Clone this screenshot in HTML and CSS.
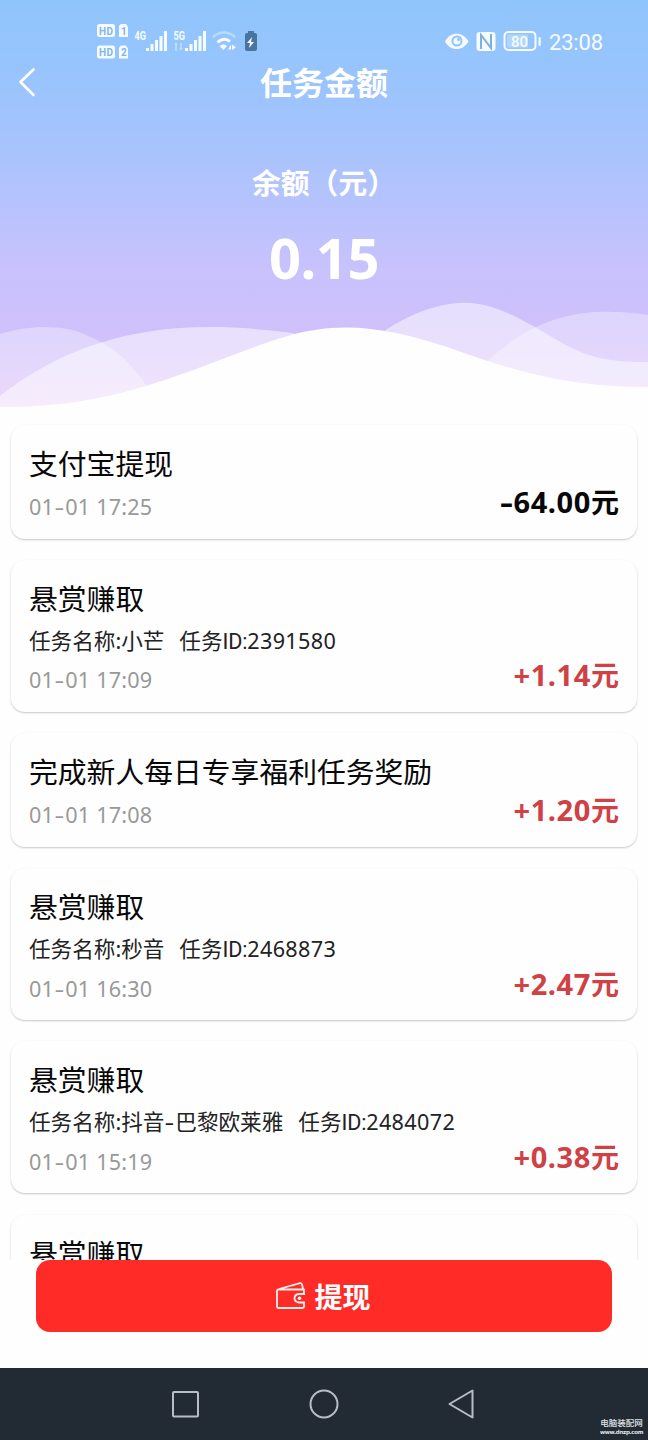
FILE: index.html
```html
<!DOCTYPE html>
<html lang="zh-CN">
<head>
<meta charset="utf-8">
<title>任务金额</title>
<link rel="stylesheet" href="styles.css">
</head>
<body>
<div class="screen">
  <header class="hero">
    <svg class="waves" viewBox="0 0 648 120" width="648" height="120">
      <path class="wave-soft" d="M0 44C30 35 65 34 88 46C108 54 128 68 146 95L150 120H0Z"/>
      <path class="wave-mid" d="M0 106C28 84 65 63 100 53C150 37 210 32 292 43L340 60L230 100L60 120H0Z"/>
      <path class="wave-mid" d="M374 48C412 20 447 11 472 13C502 16 530 34 564 54C590 68 610 72 648 72V120H384Z"/>
      <path class="wave-soft" d="M480 79C515 41 560 20 612 22C628 22 640 24 648 25V120H480Z"/>
      <path class="wave-front" d="M0 117C60 117 105 109 152 94C205 78 275 45 315 40C360 33 400 42 450 58C510 80 570 98 648 97V120H0Z"/>
    </svg>
    <div class="status">
      <svg width="170" height="44" viewBox="94 20 170 44" fill="#f5fbff">
        <rect x="97" y="24" width="18" height="13" rx="2.5"/>
        <path d="M121 24H126L128 27V37H119V26Z"/>
        <rect x="97" y="45.500" width="18" height="13" rx="2.500"/>
        <path d="M121 45.500H126L128 48.500V58.500H119V47.500Z"/>
        <g class="chip-text"><text x="99" y="34.500" textLength="14">HD</text><text x="99" y="56" textLength="14">HD</text><text x="121" y="34.500">1</text><text x="121" y="56">2</text></g>
        <text class="net-text" x="134.500" y="39.500" textLength="11.500" lengthAdjust="spacingAndGlyphs">4G</text>
        <text class="net-text" x="173.500" y="39.500" textLength="11.500" lengthAdjust="spacingAndGlyphs">5G</text>
        <path d="M146 48h3v3h-3zM150.500 44h3v7h-3zM155 40h3v11h-3zM159.500 36h3v15h-3zM164 31h3v20h-3zM185 48h3v3h-3zM189.500 44h3v7h-3zM194 40h3v11h-3zM198.500 36h3v15h-3zM203 31h3v20h-3z"/>
        <path opacity=".4" d="M174 45l2-3 2 3h-1v6h-2v-6zM179 48h1v-5h2v5h1l-2 3z"/>
        <path d="M213 37Q224 28 235 37" fill="none" stroke="#f5fbff" stroke-width="2.500" opacity=".4"/>
        <path d="M217.500 42.500Q224 36.500 230 41.500" fill="none" stroke="#f5fbff" stroke-width="3"/>
        <path d="M219.500 46Q223.500 42.500 227 46L223.500 50ZM228 49.500l3-5v5zM232 44.500l4 3-4 2.500z"/>
        <path d="M248 31h6v2h1q2 0 2 2v14q0 2-2 2h-8q-2 0-2-2V35q0-2 2-2h1z" fill="#49749f"/>
        <path d="M252 37l-5 6h3l-1 5 5-6h-3z"/>
      </svg>
      <svg width="160" height="44" viewBox="443 20 160 44" fill="#f5fbff">
        <path d="M445 41.500C450 31 463 31 468.500 41.500C463 51.500 450 51.500 445 41.500Z"/>
        <circle cx="457" cy="41" r="5.500" fill="#90c2fa"/><circle cx="457" cy="41" r="3.600"/><circle cx="458.500" cy="39.500" r="1.500" fill="#90c2fa"/>
        <rect x="476.500" y="32" width="19" height="19" rx="3"/>
        <path d="M481 49V35L491 48V34" fill="none" stroke="#7eb0e6" stroke-width="2"/>
        <rect x="504.500" y="32" width="31" height="18" rx="4" fill="none" stroke="#f5fbff" stroke-width="2"/>
        <rect x="507" y="34.500" width="21" height="13" rx="1" opacity=".3"/>
        <rect x="538.500" y="37" width="2.200" height="9" rx="1"/>
        <text class="battery-text" x="511" y="47" textLength="17">80</text>
        <text class="clock-text" x="549" y="49.500" textLength="54">23:08</text>
      </svg>
    </div>
    <div class="titlebar">
      <svg class="back" width="20" height="30" viewBox="0 0 20 30"><path d="M16.500 2.500L3.500 15L16.500 28"/></svg>
      <h1 class="title">任务金额</h1>
    </div>
    <div class="balance-label">余额（元）</div>
    <div class="balance">0.15</div>
  </header>

  <main class="list">
    <article class="card"><div><h2 class="name">支付宝提现</h2><p class="date">01<span class="dash">-</span>01 17:25</p></div><strong class="amount out"><span class="dash">-</span>64.00<span class="unit">元</span></strong></article>
    <article class="card"><div><h2 class="name">悬赏赚取</h2><p class="desc"><span>任务名称:小芒</span><span>任务<span class="id">ID:</span><span class="num">2391580</span></span></p><p class="date">01<span class="dash">-</span>01 17:09</p></div><strong class="amount">+1.14<span class="unit">元</span></strong></article>
    <article class="card"><div><h2 class="name">完成新人每日专享福利任务奖励</h2><p class="date">01<span class="dash">-</span>01 17:08</p></div><strong class="amount">+1.20<span class="unit">元</span></strong></article>
    <article class="card"><div><h2 class="name">悬赏赚取</h2><p class="desc"><span>任务名称:秒音</span><span>任务<span class="id">ID:</span><span class="num">2468873</span></span></p><p class="date">01<span class="dash">-</span>01 16:30</p></div><strong class="amount">+2.47<span class="unit">元</span></strong></article>
    <article class="card"><div><h2 class="name">悬赏赚取</h2><p class="desc"><span>任务名称:抖音<span class="dash">-</span>巴黎欧莱雅</span><span>任务<span class="id">ID:</span><span class="num">2484072</span></span></p><p class="date">01<span class="dash">-</span>01 15:19</p></div><strong class="amount">+0.38<span class="unit">元</span></strong></article>
    <article class="card cut"><div><h2 class="name">悬赏赚取</h2></div></article>
  </main>

  <div class="action">
    <button class="withdraw">
      <svg width="30" height="28" viewBox="0 0 30 28"><path d="M28 12V7.500H2.500Q1 7.500 1 9V24.500Q1 26 2.500 26H26.500Q28 26 28 24.500V20.500M3 7L24 1.200Q25.500 1 26 2.500L27 7M29 12H23Q18.500 12.500 18.500 16.300T23 20.500H29"/><circle cx="23.500" cy="16.300" r="1.700"/></svg>
      <span>提现</span>
    </button>
  </div>

  <nav class="nav">
    <svg width="648" height="72" viewBox="0 0 648 72"><rect x="173" y="24" width="25" height="24.500" rx="1"/><circle cx="324" cy="36" r="13.500"/><path d="M472.500 22.500V49.500L449.500 36Z"/></svg>
    <div class="mark"><div class="mark-name">电脑装配网</div><div class="mark-url">www.dnzp.com</div></div>
  </nav>
</div>
</body>
</html>
```
FILE: styles.css
```css
* { box-sizing: border-box; }
body { margin: 0; background: #fff; font-family: "Noto Sans", "Noto Sans CJK SC", sans-serif; }
h1, h2, p { margin: 0; font-weight: 400; }
.screen { width: 648px; height: 1440px; overflow: hidden; display: flex; flex-direction: column; background: #fefefe; }

.hero { position: relative; flex: none; height: 410px; color: #fff; text-align: center; background: linear-gradient(#8fc5fc 0, #9bc4fd 90px, #abc3fd 160px, #c8c2fd 270px, #d0c0fb 335px, #e2c4f8 410px); }
.waves { position: absolute; left: 0; bottom: 0; display: block; }
.wave-soft { fill: #fff; opacity: .34; }
.wave-mid { fill: #fff; opacity: .5; }
.wave-front { fill: #fefefe; }
.status { position: relative; height: 64px; padding: 20px 45px 0 94px; display: flex; justify-content: space-between; }
.chip-text { fill: #82b5e8; font: 700 10px Roboto, sans-serif; }
.net-text { font: 700 12px Roboto, sans-serif; }
.battery-text { font: 500 15px Roboto, sans-serif; }
.clock-text { font: 400 22px Roboto, sans-serif; }
.titlebar { position: relative; display: flex; align-items: center; height: 36px; padding-left: 17px; }
.back { fill: none; stroke: #fff; stroke-width: 2.6; stroke-linecap: round; stroke-linejoin: round; }
.title { flex: 1; padding: 2px 37px 0 0; font-size: 32px; line-height: 36px; font-weight: 700; }
.balance-label { position: relative; margin-top: 63px; font-size: 28.800px; line-height: 40px; font-weight: 700; }
.balance { position: relative; margin-top: 22px; font-size: 56px; line-height: 64px; font-weight: 700; letter-spacing: -.4px; }

.list { flex: none; height: 850px; overflow: hidden; padding: 15px 11px 0; display: flex; flex-direction: column; gap: 21.300px; }
.card { flex: none; display: flex; justify-content: space-between; align-items: flex-end; padding: 16px 18px 12.500px; border-radius: 14px; background: #fefefe; box-shadow: 0 1px 2px rgba(0,0,0,.22); }
.cut { height: 150px; align-items: flex-start; }
.name { height: 46px; font-size: 28.800px; line-height: 46px; color: #080808; }
.desc { display: flex; gap: 15px; height: 38.600px; font-size: 21.600px; line-height: 38.600px; color: #222; }
.id { font-family: Roboto, sans-serif; letter-spacing: -.2px; }
.num { letter-spacing: .35px; }
.dash { display: inline-block; margin: 0 2px; transform: scaleX(1.4); }
.date { height: 39px; font-size: 21.600px; line-height: 39px; color: #999; letter-spacing: .2px; }
.amount { height: 46px; margin-bottom: 1px; font-size: 29px; line-height: 46px; font-weight: 700; letter-spacing: .6px; color: #cf4145; }
.unit { font-size: 28px; letter-spacing: 0; }
.out { color: #080808; }

.action { flex: none; height: 108px; padding: 0 36px; }
.withdraw { width: 100%; height: 72px; border: 0; border-radius: 14px; background: #ff2b27; color: #fff; display: flex; align-items: center; justify-content: center; gap: 8px; font: 700 28px/40px "Noto Sans CJK SC", sans-serif; }
.withdraw svg { margin-left: -1px; fill: none; stroke: #fff0ec; stroke-width: 1.800; stroke-linejoin: round; }
.withdraw circle { fill: #fff; stroke: none; }

.nav { position: relative; flex: none; height: 72px; background: #222a33; }
.nav svg { display: block; fill: none; stroke: #b9bdc5; stroke-width: 2; stroke-linejoin: round; }
.mark { position: absolute; right: 5px; bottom: 4px; width: 43px; color: #e0e4e8; text-align: center; white-space: nowrap; }
.mark-name { font: 500 8.500px/12px "Noto Sans CJK SC", sans-serif; }
.mark-url { font: 700 5.500px/8px "DejaVu Sans", sans-serif; letter-spacing: -.3px; }
```
